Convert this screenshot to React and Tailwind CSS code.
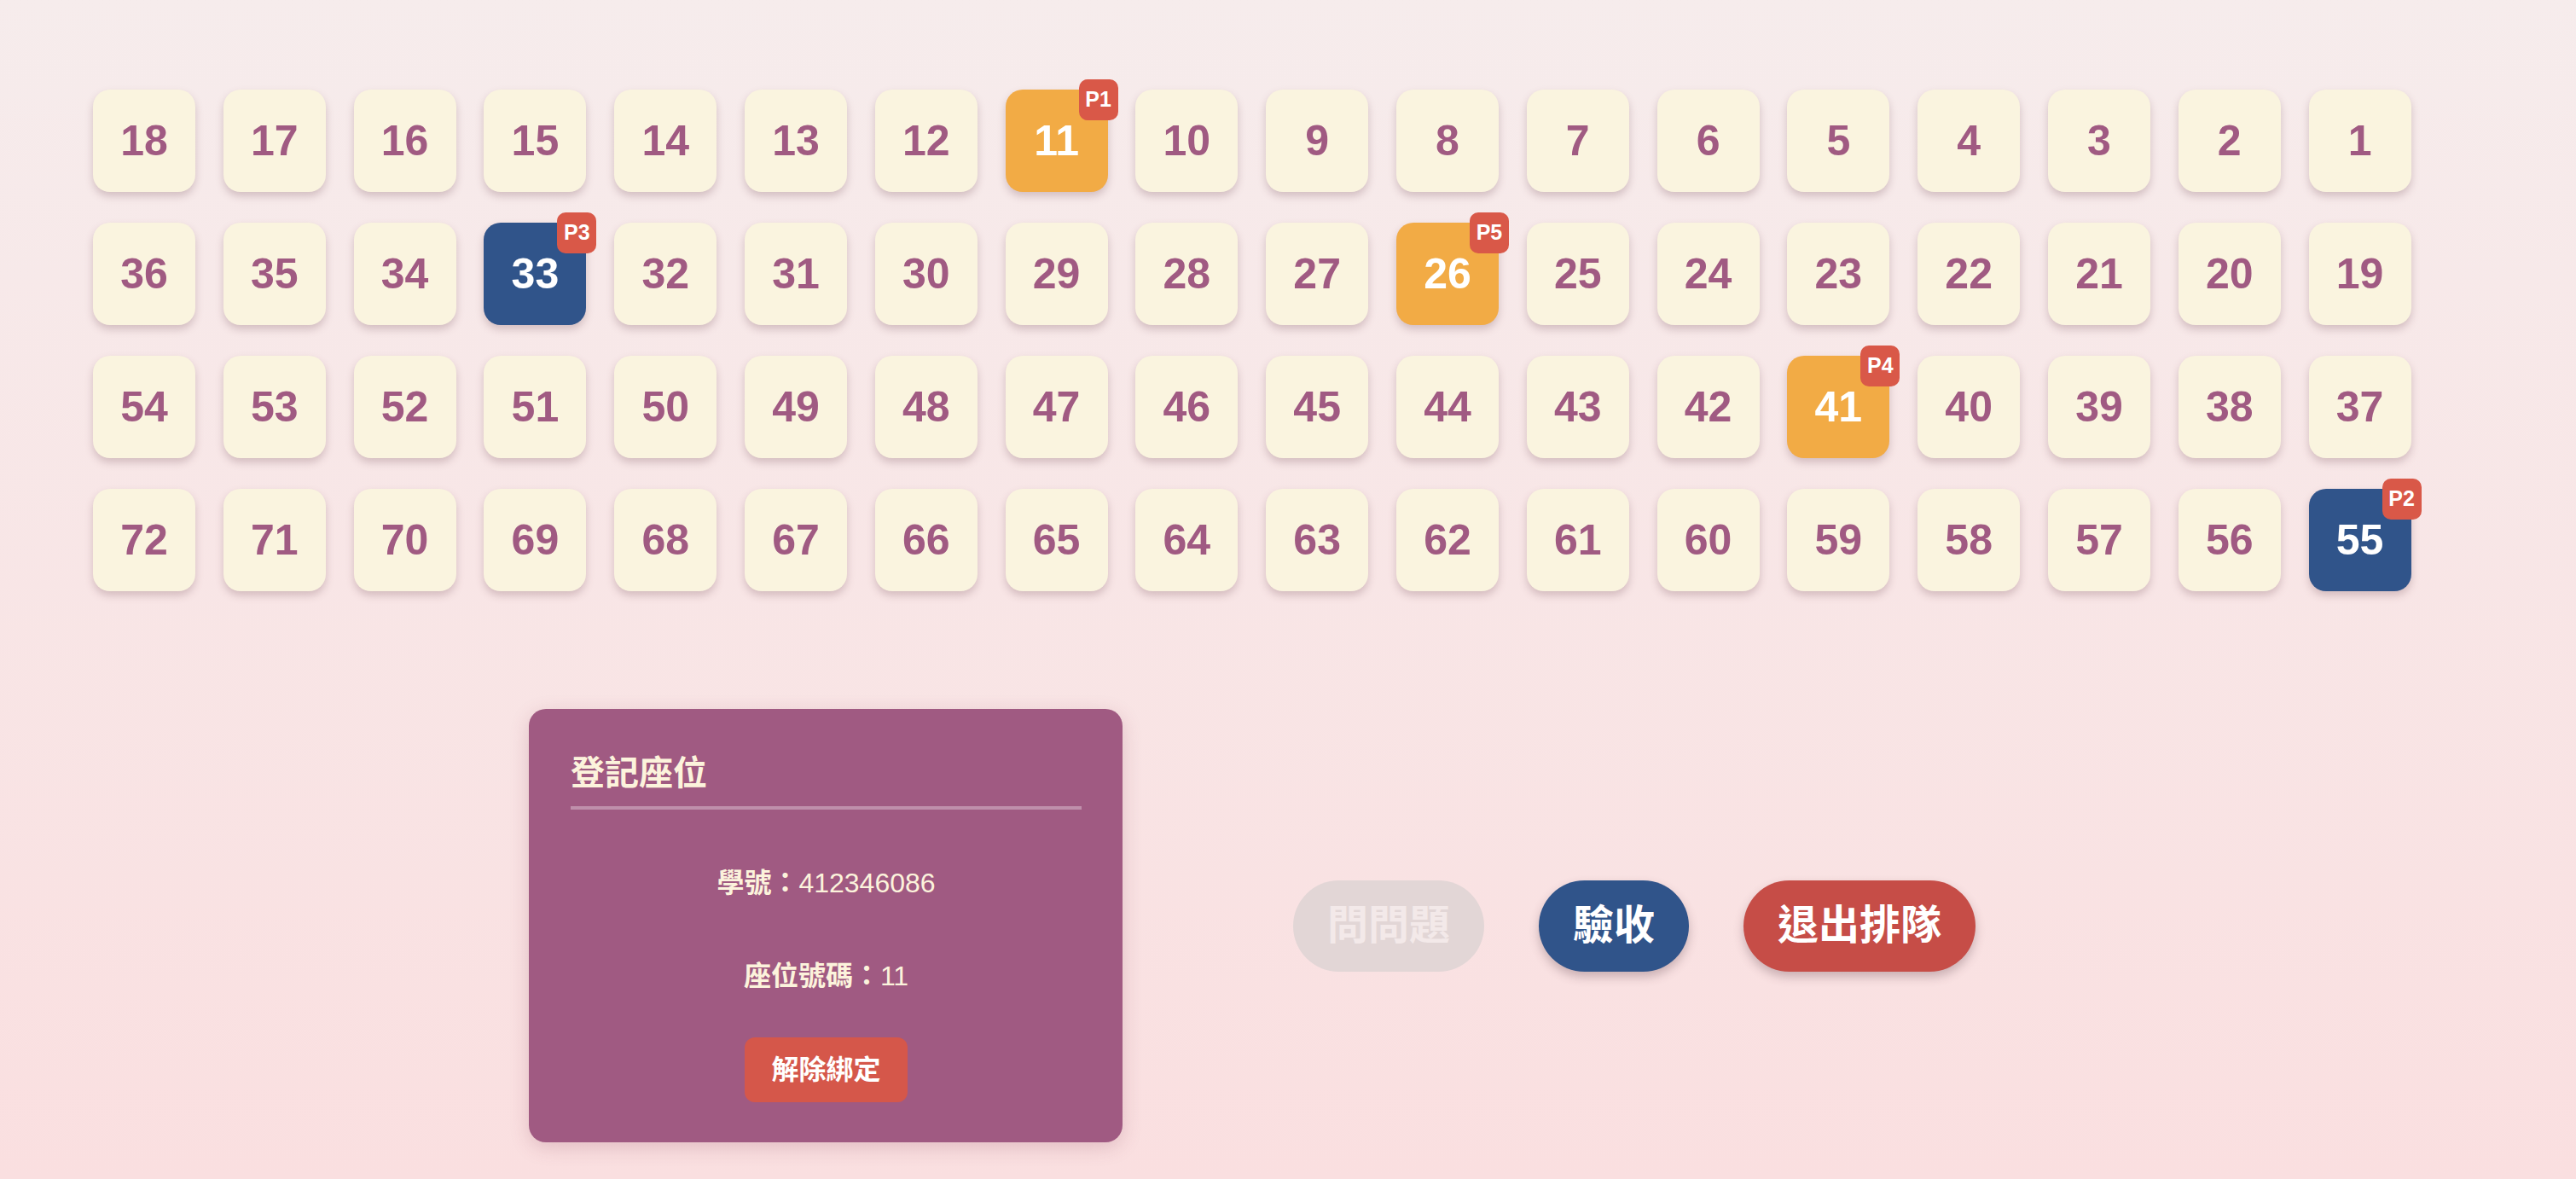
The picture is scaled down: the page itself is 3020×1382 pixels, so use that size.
import React from "react";

// seats are laid out right-to-left in rows of 18
const rows = [0, 1, 2, 3].map((r) =>
  Array.from({ length: 18 }, (_, i) => (r + 1) * 18 - i)
);

// queue markers: seat -> [kind, label]
const marked = {
  11: ["wait", "P1"],
  55: ["check", "P2"],
  33: ["check", "P3"],
  41: ["wait", "P4"],
  26: ["wait", "P5"],
};

function Seat({ n }) {
  const m = marked[n];
  const tone = !m
    ? "bg-[#faf4df] text-[#a05a82]"
    : m[0] === "wait"
    ? "bg-[#f2ab45] text-white"
    : "bg-[#30548a] text-white";
  return (
    <div
      className={`relative w-[120px] h-[120px] rounded-[20px] flex items-center justify-center text-[50px] font-bold shadow-[0_5px_10px_rgba(120,80,90,0.28)] ${tone}`}
    >
      {n}
      {m && (
        <span className="absolute -top-[12px] -right-[12px] w-[46px] h-[48px] rounded-[10px] bg-[#d95848] text-white text-[25px] font-bold flex items-center justify-center">
          {m[1]}
        </span>
      )}
    </div>
  );
}

export default function App() {
  return (
    <div
      className="min-h-screen h-[1382px] bg-gradient-to-b from-[#f6ecec] to-[#fadfe0] pt-[105px] pl-[109px]"
      style={{ fontFamily: '"Liberation Sans", "Noto Sans CJK TC", sans-serif' }}
    >
      {/* ── Seat grid ── */}
      <div className="grid grid-cols-[repeat(18,120px)] gap-x-[32.8px] gap-y-[36px]">
        {rows.flat().map((n) => (
          <Seat key={n} n={n} />
        ))}
      </div>

      {/* ── Bottom: card + actions ── */}
      <div className="mt-[138px] ml-[511px] flex items-center gap-[200px]">
        <div className="w-[696px] h-[508px] rounded-[20px] bg-[#a05a82] shadow-[0_6px_22px_rgba(140,70,90,0.22)] pt-[51px] pl-[49px] pr-[48px] flex flex-col text-[#fcf3dc]">
          <div className="border-b-4 border-[#bf8fab] pb-[15px] text-[40px] leading-[48px] font-bold">
            登記座位
          </div>

          <div className="mt-[67px] text-center text-[32px] leading-[38px] whitespace-nowrap">
            <span className="font-bold">學號：</span>412346086
          </div>

          <div className="mt-[71px] text-center text-[32px] leading-[38px] whitespace-nowrap">
            <span className="font-bold">座位號碼：</span>11
          </div>

          <div className="mt-[53px] flex justify-center">
            <button className="w-[191px] h-[76px] rounded-[12px] bg-[#d5574a] text-white text-[32px] font-bold flex items-center justify-center">
              解除綁定
            </button>
          </div>
        </div>

        <div className="flex items-center gap-[64px]">
          <button className="h-[107px] px-10 rounded-full bg-[#e2d6d6] text-[#f3e9e9] text-[48px] font-bold">
            問問題
          </button>
          <button className="h-[107px] px-10 rounded-full bg-[#30548a] text-white text-[48px] font-bold shadow-[0_6px_12px_rgba(90,60,70,0.3)]">
            驗收
          </button>
          <button className="h-[107px] px-10 rounded-full bg-[#c64d47] text-white text-[48px] font-bold shadow-[0_6px_12px_rgba(90,60,70,0.3)]">
            退出排隊
          </button>
        </div>
      </div>
    </div>
  );
}
